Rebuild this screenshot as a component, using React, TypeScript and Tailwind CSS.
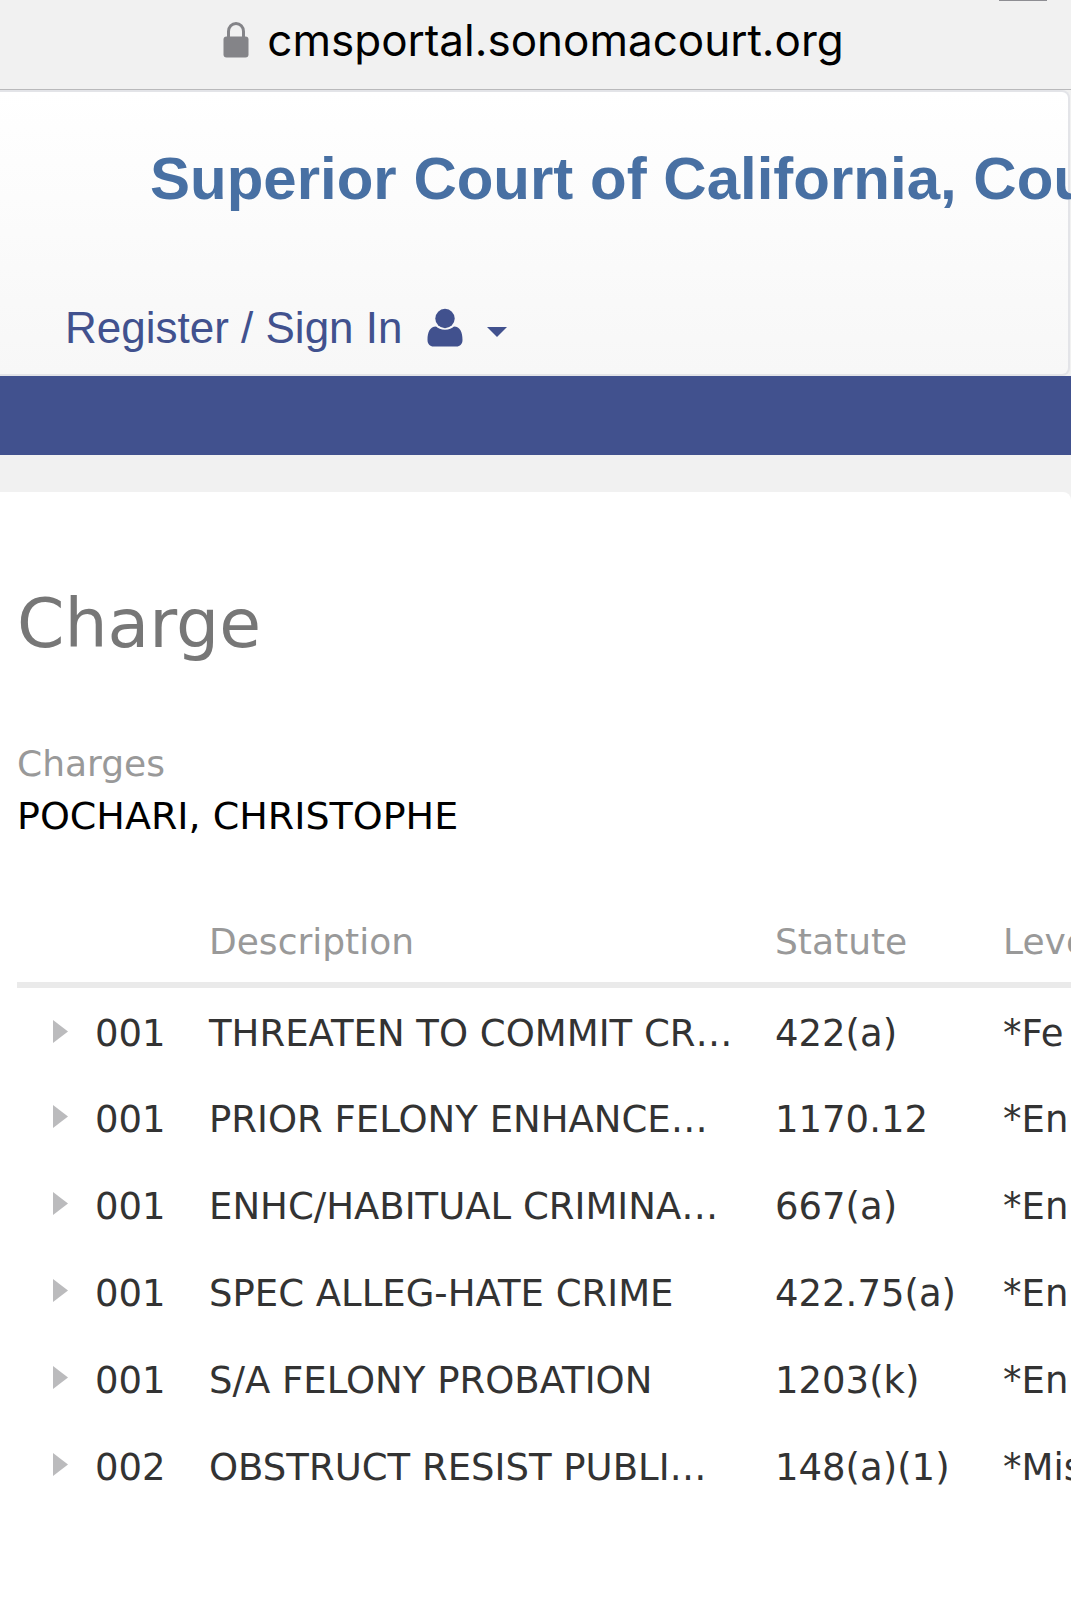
import { useState } from "react";

interface Charge {
  count: string;
  description: string;
  statute: string;
  level: string;
}

const CHARGES: Charge[] = [
  { count: "001", description: "THREATEN TO COMMIT CR…", statute: "422(a)", level: "*Fe" },
  { count: "001", description: "PRIOR FELONY ENHANCE…", statute: "1170.12", level: "*En" },
  { count: "001", description: "ENHC/HABITUAL CRIMINA…", statute: "667(a)", level: "*En" },
  { count: "001", description: "SPEC ALLEG-HATE CRIME", statute: "422.75(a)", level: "*En" },
  { count: "001", description: "S/A FELONY PROBATION", statute: "1203(k)", level: "*En" },
  { count: "002", description: "OBSTRUCT RESIST PUBLI…", statute: "148(a)(1)", level: "*Mis" },
];

function LockIcon() {
  return (
    <svg viewBox="0 0 26 36" className="h-9 w-[26px] shrink-0" aria-hidden="true">
      <path d="M5.500 17V9.500a7.500 8 0 0 1 15 0V17" fill="none" stroke="#848488" strokeWidth="3" />
      <rect x="0.5" y="14.5" width="25" height="21" rx="3" fill="#848488" />
    </svg>
  );
}

function UserIcon() {
  return (
    <svg viewBox="0 0 36 40" className="h-10 w-9 shrink-0" fill="#41518e" aria-hidden="true">
      <path d="M9 18.500C3 18.500.5 24 .5 32c0 4 2.500 6.500 6 6.500h23c3.500 0 6-2.500 6-6.500 0-8-2.500-13.500-8.500-13.500-2 1.700-5 3.200-9 3.200s-7-1.500-9-3.200Z" />
      <circle cx="18" cy="10.500" r="9.700" />
    </svg>
  );
}

export default function App() {
  const [openRow, setOpenRow] = useState<number | null>(null);

  return (
    <div className="min-h-screen w-full overflow-hidden bg-[#f1f1f1]">
      <div className="relative flex h-[90px] items-center justify-center gap-[18px] border-b border-[#b9b9bb] bg-[#f1f1f1] pb-2.5 pr-1">
        <LockIcon />
        <span className="font-['Inter',sans-serif] text-[44px] leading-[56px] text-black">
          cmsportal.sonomacourt.org
        </span>
        <span className="absolute right-6 top-0 h-px w-12 bg-[#8e8e93]" />
      </div>

      <header className="mr-px flex h-[286px] flex-col justify-between rounded-r-lg border-y-2 border-r-2 border-[#e3e4e8] bg-gradient-to-b from-white to-[#f7f7f7] pb-[18px] pl-[65px] pt-[55px] font-['Liberation_Sans',Arial,sans-serif]">
        <a href="#home" className="whitespace-nowrap pl-[85px] text-[60px] font-bold leading-[64px] text-[#4870a3]">
          Superior Court of California, Cou
        </a>
        <button type="button" className="flex items-center self-start text-[44px] leading-[56px] text-[#41518e]">
          Register / Sign In
          <span className="ml-6">
            <UserIcon />
          </span>
          <svg viewBox="0 0 20 10" className="ml-6 mt-2 h-[10px] w-5" fill="#41518e" aria-hidden="true">
            <path d="M0 0h20L10 10Z" />
          </svg>
        </button>
      </header>

      <nav className="h-[79px] bg-[#41518e]" aria-label="Main" />

      <main className="mt-[37px] min-h-[1128px] overflow-hidden rounded-tr-lg bg-white pl-[17px] pt-[90px] font-['DejaVu_Sans',Verdana,sans-serif] text-[36px]">
        <h1 className="text-[68px] leading-[84px] text-[#777777]">Charge</h1>

        <h2 className="mt-[72px] leading-[52px] text-[#999999]">Charges</h2>
        <p className="text-[38px] leading-[52px] text-black">POCHARI, CHRISTOPHE</p>

        <table className="mt-[60px] w-full table-fixed border-collapse text-left">
          <colgroup>
            <col className="w-[78px]" />
            <col className="w-[114px]" />
            <col className="w-[566px]" />
            <col className="w-[228px]" />
            <col />
          </colgroup>
          <thead>
            <tr className="h-[83px] border-b-[6px] border-[#eaeaea] text-[#999999]">
              <th />
              <th />
              <th className="font-normal">Description</th>
              <th className="font-normal">Statute</th>
              <th className="font-normal">Leve</th>
            </tr>
          </thead>
          <tbody className="text-[37px] text-[#333333]">
            {CHARGES.map((charge, i) => (
              <tr key={i} className="h-[87px] whitespace-nowrap">
                <td className="pl-9 pt-0.5">
                  <button
                    type="button"
                    aria-label="Toggle details"
                    aria-expanded={openRow === i}
                    onClick={() => setOpenRow(openRow === i ? null : i)}
                    className="flex items-center"
                  >
                    <svg viewBox="0 0 15 23" className="h-[23px] w-[15px]" fill="#bbbbbd" aria-hidden="true">
                      <path d="M0 0L15 11.500L0 23Z" />
                    </svg>
                  </button>
                </td>
                <td className="pt-2">{charge.count}</td>
                <td className="pt-2">{charge.description}</td>
                <td className="pt-2">{charge.statute}</td>
                <td className="pt-2">{charge.level}</td>
              </tr>
            ))}
          </tbody>
        </table>
      </main>
    </div>
  );
}
